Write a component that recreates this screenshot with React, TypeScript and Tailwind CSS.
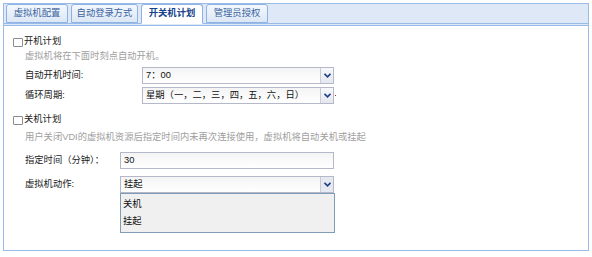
import React from "react";

const Chevron = () => (
  <svg width="7" height="5" viewBox="0 0 7 5">
    <path d="M0.5 0.8 L3.5 3.8 L6.5 0.8" fill="none" stroke="#1e3f8a" strokeWidth="1.6" />
  </svg>
);

const Select = ({ value, w, open }: { value: string; w: string; open?: boolean }) => (
  <div className={`${w} h-[17px] flex border border-[#b5b8c8] bg-gradient-to-b from-[#f4f4f4] to-white`}>
    <div className="flex-1 flex items-center pl-[3px] text-[#111]">{value}</div>
    <div
      className={`w-[13px] flex items-center justify-center border-l border-[#c9ccd6] ${
        open ? "bg-[#e6e9f0]" : "bg-gradient-to-b from-[#f7f8fa] to-[#e4e7ee]"
      }`}
    >
      <Chevron />
    </div>
  </div>
);

const Checkbox = () => (
  <div className="w-[10px] h-[9px] border border-[#8c8c8c] bg-white rounded-[1px] mr-[1px]" />
);

const Tab = ({ label, w, active }: { label: string; w: string; active?: boolean }) => (
  <div
    className={`${w} h-[19px] flex items-center justify-center border border-[#8db2e3] rounded-t-[3px] ${
      active
        ? "bg-white font-bold text-[#15428b] border-b-white h-[20px] -mb-[1px]"
        : "bg-gradient-to-b from-[#f4f8fd] to-[#dce7f5] text-[#3b64a0]"
    }`}
  >
    {label}
  </div>
);

export default function App() {
  return (
    <div className="w-[592px] h-[257px] bg-white pt-[3px] pl-[3px] text-[9.3px] leading-none font-['Liberation_Sans','Noto_Sans_CJK_SC',sans-serif]">
      <div className="w-[586px] h-[248px] border border-[#99bbe8] flex flex-col">
        <div className="h-[20px] bg-[#dfe8f6] border-b border-[#99bbe8] flex items-end gap-[3px] pl-[2px]">
          <Tab label="虚拟机配置" w="w-[62px]" />
          <Tab label="自动登录方式" w="w-[67px]" />
          <Tab label="开关机计划" w="w-[62px]" active />
          <Tab label="管理员授权" w="w-[62px]" />
        </div>
        <div className="h-[2px] bg-[#dfe8f6] border-b border-[#99bbe8]" />
        <div className="flex flex-col pl-[9px] text-[#222]">
          <div className="mt-[10px] h-[12px] flex items-center">
            <Checkbox />
            <span>开机计划</span>
          </div>
          <div className="mt-[3px] h-[12px] flex items-center pl-[12px] text-[#a0a0a0]">
            虚拟机将在下面时刻点自动开机。
          </div>
          <div className="mt-[4px] flex items-center pl-[12px]">
            <div className="w-[117px]">自动开机时间:</div>
            <Select value="7：00" w="w-[192px]" />
          </div>
          <div className="mt-[3px] flex items-center pl-[12px]">
            <div className="w-[117px]">循环周期:</div>
            <Select value="星期（一，二，三，四，五，六，日）" w="w-[192px]" />
            <div className="ml-[1px] w-[1px] h-[1px] bg-[#e0202a]" />
          </div>
          <div className="mt-[10px] h-[12px] flex items-center">
            <Checkbox />
            <span>关机计划</span>
          </div>
          <div className="mt-[6px] h-[12px] flex items-center pl-[12px] text-[#a0a0a0]">
            用户关闭VDI的虚拟机资源后指定时间内未再次连接使用，虚拟机将自动关机或挂起
          </div>
          <div className="mt-[8px] flex items-center pl-[12px]">
            <div className="w-[95px]">指定时间（分钟）：</div>
            <div className="w-[214px] h-[17px] border border-[#b5b8c8] bg-gradient-to-b from-[#f4f4f4] to-white flex items-center pl-[3px] text-[#111]">
              30
            </div>
          </div>
          <div className="mt-[7px] flex items-start pl-[12px]">
            <div className="w-[95px] h-[17px] flex items-center">虚拟机动作:</div>
            <div className="flex flex-col">
              <Select value="挂起" w="w-[214px]" open />
              <div className="w-[215px] h-[40px] border border-[#7f9db9] bg-[#f0f0f0] flex flex-col justify-center gap-[5px] pl-[2px] text-[#111]">
                <div className="h-[12px] flex items-center">关机</div>
                <div className="h-[12px] flex items-center">挂起</div>
              </div>
            </div>
          </div>
        </div>
      </div>
    </div>
  );
}
